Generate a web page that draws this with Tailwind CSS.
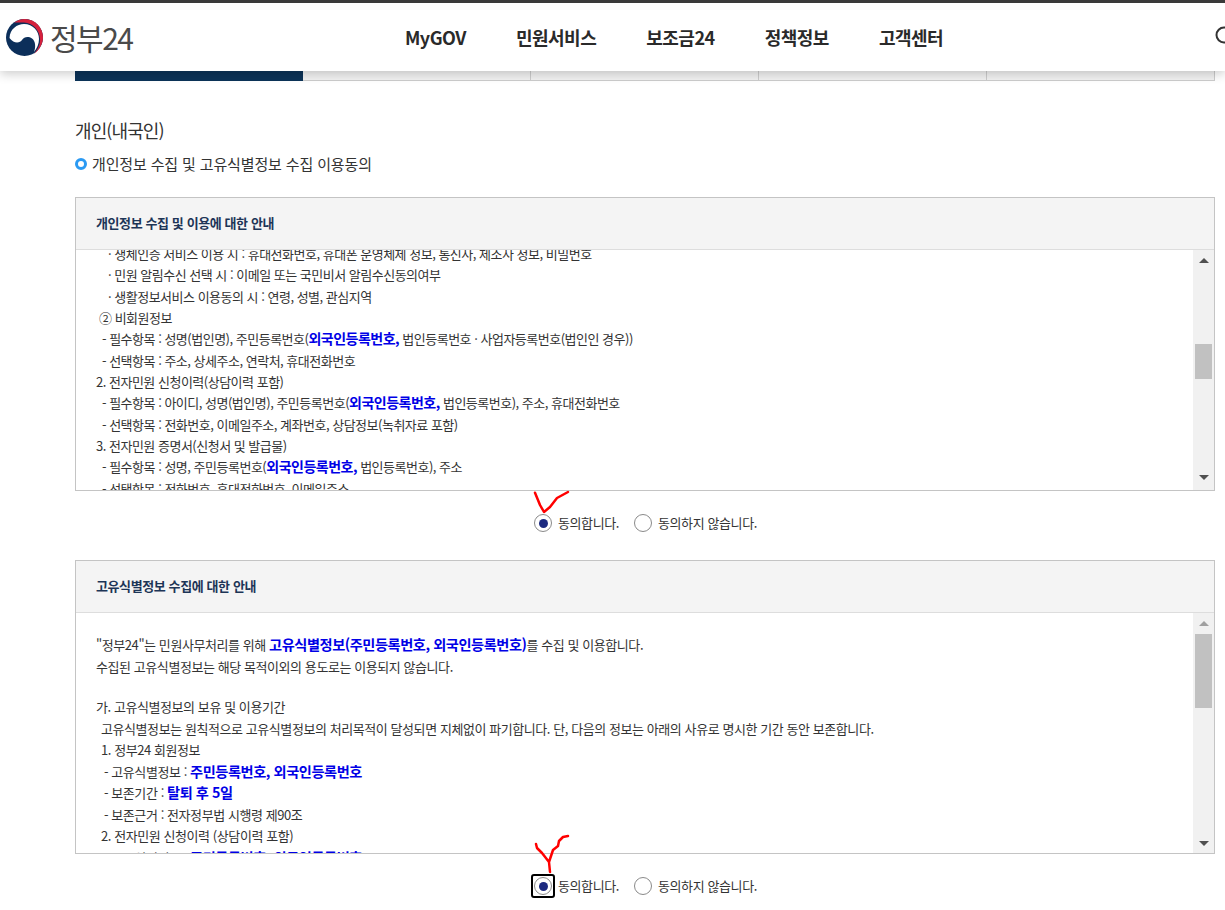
<!DOCTYPE html>
<html lang="ko">
<head>
  <meta charset="UTF-8">
  <title>정부24</title>
  <script src="https://cdn.jsdelivr.net/npm/@tailwindcss/browser@4"></script>
</head>
<body class="bg-white text-[#333] font-['Noto_Sans_CJK_KR','Noto_Sans',sans-serif] h-[910px] overflow-hidden relative">
  <!-- Header -->
  <header class="relative z-10 h-[71px] bg-white border-t-[3px] border-[#3a3a3a] shadow-[0_3px_10px_rgba(0,0,0,0.2)] flex items-center overflow-hidden">
    <div class="flex items-center ml-[6px] w-[399px]">
      <svg width="37" height="37" viewBox="0 0 37 37" class="shrink-0">
        <circle cx="18.5" cy="18.5" r="18.5" fill="#0c2f5a"/>
        <path d="M3.5 19C4 10 11 5 18 5C27 5 33 12 33 20C33 25 31 29 28 33C30 28 29.5 22 26 19.5C22 17 18 18 16 21C14 24 8 25 3.5 19Z" fill="#fff"/>
        <path d="M8 3.5C12 1 15 0 19 0C29 0 37 8.5 37 18.5C37 25 33 31 28 35C32 30 34.5 25 34 20C33.5 11 27 4 18 3.5C14.5 3.3 11 3.5 8 3.5Z" fill="#d6213c"/>
      </svg>
      <span class="ml-[7px] text-[30px] leading-none text-[#4a4a4a] tracking-[-1.5px]">정부24</span>
    </div>
    <nav class="flex gap-[50px] text-[18px] font-bold text-[#2a2a2a] tracking-[-0.5px]">
      <a>MyGOV</a>
      <a>민원서비스</a>
      <a>보조금24</a>
      <a>정책정보</a>
      <a>고객센터</a>
    </nav>
    <svg width="20" height="20" viewBox="0 0 20 20" class="absolute left-[1215px] top-[23px]" fill="none" stroke="#333" stroke-width="2"><circle cx="9" cy="9" r="7.5"/></svg>
  </header>

  <main class="px-[75px] w-[1215px] box-content">
    <!-- Tabs -->
    <div class="flex h-[10px] w-[1140px]">
      <div class="w-[228px] bg-[#0c3358]"></div>
      <div class="w-[228px] border-r border-b border-[#ccc] bg-[#f2f2f2]"></div>
      <div class="w-[228px] border-r border-b border-[#ccc] bg-[#f2f2f2]"></div>
      <div class="w-[228px] border-r border-b border-[#ccc] bg-[#f2f2f2]"></div>
      <div class="w-[228px] border-r border-b border-[#ccc] bg-[#f2f2f2]"></div>
    </div>

    <h2 class="mt-[36px] text-[18px] leading-[26px] text-[#333] tracking-[-0.9px]">개인(내국인)</h2>
    <div class="mt-[10px] flex items-center h-[22px] text-[15px] tracking-[-0.14px] text-[#333]">
      <span class="w-[12px] h-[12px] rounded-full border-[3px] border-[#2b9af3] mr-[5px]"></span>
      개인정보 수집 및 고유식별정보 수집 이용동의
    </div>

    <!-- Box 1 -->
    <section class="mt-[22px] w-[1140px] h-[294px] border border-[#c4c4c4] flex flex-col">
      <div class="h-[52px] shrink-0 bg-[#f4f4f4] border-b border-[#ddd] flex items-center pl-[20px] pb-[2px] text-[13px] font-bold text-[#1d3557] tracking-[-0.4px]">개인정보 수집 및 이용에 대한 안내</div>
      <div class="flex flex-1 min-h-0">
        <div class="flex-1 overflow-hidden text-[13px] leading-[21.35px] tracking-[-0.5px] text-[#333] whitespace-nowrap pl-[20px]">
          <div class="-mt-[7px]">
            <p class="pl-[12px]">· 생체인증 서비스 이용 시 : 휴대전화번호, 휴대폰 운영체제 정보, 통신사, 제조사 정보, 비밀번호</p>
            <p class="pl-[12px]">· 민원 알림수신 선택 시 : 이메일 또는 국민비서 알림수신동의여부</p>
            <p class="pl-[12px]">· 생활정보서비스 이용동의 시 : 연령, 성별, 관심지역</p>
            <p class="pl-[3px]">② 비회원정보</p>
            <p class="pl-[6px]">- 필수항목 : 성명(법인명), 주민등록번호(<b class="text-[#0000e6] text-[14px]">외국인등록번호,</b> 법인등록번호 · 사업자등록번호(법인인 경우))</p>
            <p class="pl-[6px]">- 선택항목 : 주소, 상세주소, 연락처, 휴대전화번호</p>
            <p>2. 전자민원 신청이력(상담이력 포함)</p>
            <p class="pl-[6px]">- 필수항목 : 아이디, 성명(법인명), 주민등록번호(<b class="text-[#0000e6] text-[14px]">외국인등록번호,</b> 법인등록번호), 주소, 휴대전화번호</p>
            <p class="pl-[6px]">- 선택항목 : 전화번호, 이메일주소, 계좌번호, 상담정보(녹취자료 포함)</p>
            <p>3. 전자민원 증명서(신청서 및 발급물)</p>
            <p class="pl-[6px]">- 필수항목 : 성명, 주민등록번호(<b class="text-[#0000e6] text-[14px]">외국인등록번호,</b> 법인등록번호), 주소</p>
            <p class="pl-[6px]">- 선택항목 : 전화번호, 휴대전화번호, 이메일주소</p>
          </div>
        </div>
        <div class="w-[21px] shrink-0 bg-[#f1f1f1] flex flex-col items-center relative">
          <span class="mt-[8px] w-0 h-0 border-x-[5px] border-x-transparent border-b-[5px] border-b-[#505050]"></span>
          <span class="mt-[81px] w-[17px] h-[35px] bg-[#c1c1c1]"></span>
          <span class="mt-[96px] w-0 h-0 border-x-[5px] border-x-transparent border-t-[5px] border-t-[#505050]"></span>
        </div>
      </div>
    </section>

    <!-- Agree 1 -->
    <div class="h-[69px] w-[1140px] pl-[459px] pt-[23px]">
      <div class="flex items-center h-[18px] text-[13px] tracking-[-0.4px] text-[#333]">
        <span class="w-[18px] h-[18px] rounded-full border border-[#8a8a8a] flex items-center justify-center"><span class="w-[9px] h-[9px] rounded-full bg-[#1c2a80]"></span></span>
        <span class="ml-[6px] w-[76px]">동의합니다.</span>
        <span class="w-[18px] h-[18px] rounded-full border border-[#8a8a8a]"></span>
        <span class="ml-[6px]">동의하지 않습니다.</span>
      </div>
    </div>

    <!-- Box 2 -->
    <section class="w-[1140px] h-[294px] border border-[#c4c4c4] flex flex-col">
      <div class="h-[52px] shrink-0 bg-[#f4f4f4] border-b border-[#ddd] flex items-center pl-[20px] pb-[2px] text-[13px] font-bold text-[#1d3557] tracking-[-0.4px]">고유식별정보 수집에 대한 안내</div>
      <div class="flex flex-1 min-h-0">
        <div class="flex-1 overflow-hidden text-[13px] leading-[21.5px] tracking-[-0.43px] text-[#333] whitespace-nowrap pl-[20px]">
          <div class="mt-[21px]">
            <p>"정부24"는 민원사무처리를 위해 <b class="text-[#0000e6] text-[14.2px]">고유식별정보(주민등록번호, 외국인등록번호)</b>를 수집 및 이용합니다.</p>
            <p>수집된 고유식별정보는 해당 목적이외의 용도로는 이용되지 않습니다.</p>
            <p class="h-[19px]"></p>
            <p>가. 고유식별정보의 보유 및 이용기간</p>
            <p class="pl-[5px]">고유식별정보는 원칙적으로 고유식별정보의 처리목적이 달성되면 지체없이 파기합니다. 단, 다음의 정보는 아래의 사유로 명시한 기간 동안 보존합니다.</p>
            <p class="pl-[5px]">1. 정부24 회원정보</p>
            <p class="pl-[8px]">- 고유식별정보 : <b class="text-[#0000e6] text-[14.2px]">주민등록번호, 외국인등록번호</b></p>
            <p class="pl-[8px]">- 보존기간 : <b class="text-[#0000e6] text-[14.2px]">탈퇴 후 5일</b></p>
            <p class="pl-[8px]">- 보존근거 : 전자정부법 시행령 제90조</p>
            <p class="pl-[5px]">2. 전자민원 신청이력 (상담이력 포함)</p>
            <p class="pl-[8px]">- 고유식별정보 : <b class="text-[#0000e6] text-[14.2px]">주민등록번호, 외국인등록번호</b></p>
          </div>
        </div>
        <div class="w-[21px] shrink-0 bg-[#f1f1f1] flex flex-col items-center">
          <span class="mt-[8px] w-0 h-0 border-x-[5px] border-x-transparent border-b-[5px] border-b-[#a0a0a0]"></span>
          <span class="mt-[8px] w-[17px] h-[74px] bg-[#c1c1c1]"></span>
          <span class="mt-[133px] w-0 h-0 border-x-[5px] border-x-transparent border-t-[5px] border-t-[#505050]"></span>
        </div>
      </div>
    </section>

    <!-- Agree 2 -->
    <div class="w-[1140px] pl-[459px] pt-[23px]">
      <div class="flex items-center h-[18px] text-[13px] tracking-[-0.4px] text-[#333]">
        <span class="relative w-[18px] h-[18px] rounded-full border border-[#8a8a8a] flex items-center justify-center">
          <span class="w-[9px] h-[9px] rounded-full bg-[#1c2a80]"></span>
          <span class="absolute -inset-[4px] rounded-[3px] border-2 border-black"></span>
        </span>
        <span class="ml-[6px] w-[76px]">동의합니다.</span>
        <span class="w-[18px] h-[18px] rounded-full border border-[#8a8a8a]"></span>
        <span class="ml-[6px]">동의하지 않습니다.</span>
      </div>
    </div>
  </main>

  <!-- Hand-drawn red check marks -->
  <svg class="absolute left-[530px] top-[488px] z-20" width="45" height="30" viewBox="0 0 45 30" fill="none" stroke="#f00" stroke-width="2.5" stroke-linecap="round" stroke-linejoin="round"><path d="M5 4.7L10 17L14 24L20 19L27 10L38 4"/></svg>
  <svg class="absolute left-[530px] top-[830px] z-20" width="45" height="45" viewBox="0 0 45 45" fill="none" stroke="#f00" stroke-width="2.5" stroke-linecap="round" stroke-linejoin="round"><path d="M6 14L7 18L12 23L19 32L20 42M19 32L23 20L28 16L29 11L33 7L38 6"/></svg>
</body>
</html>
